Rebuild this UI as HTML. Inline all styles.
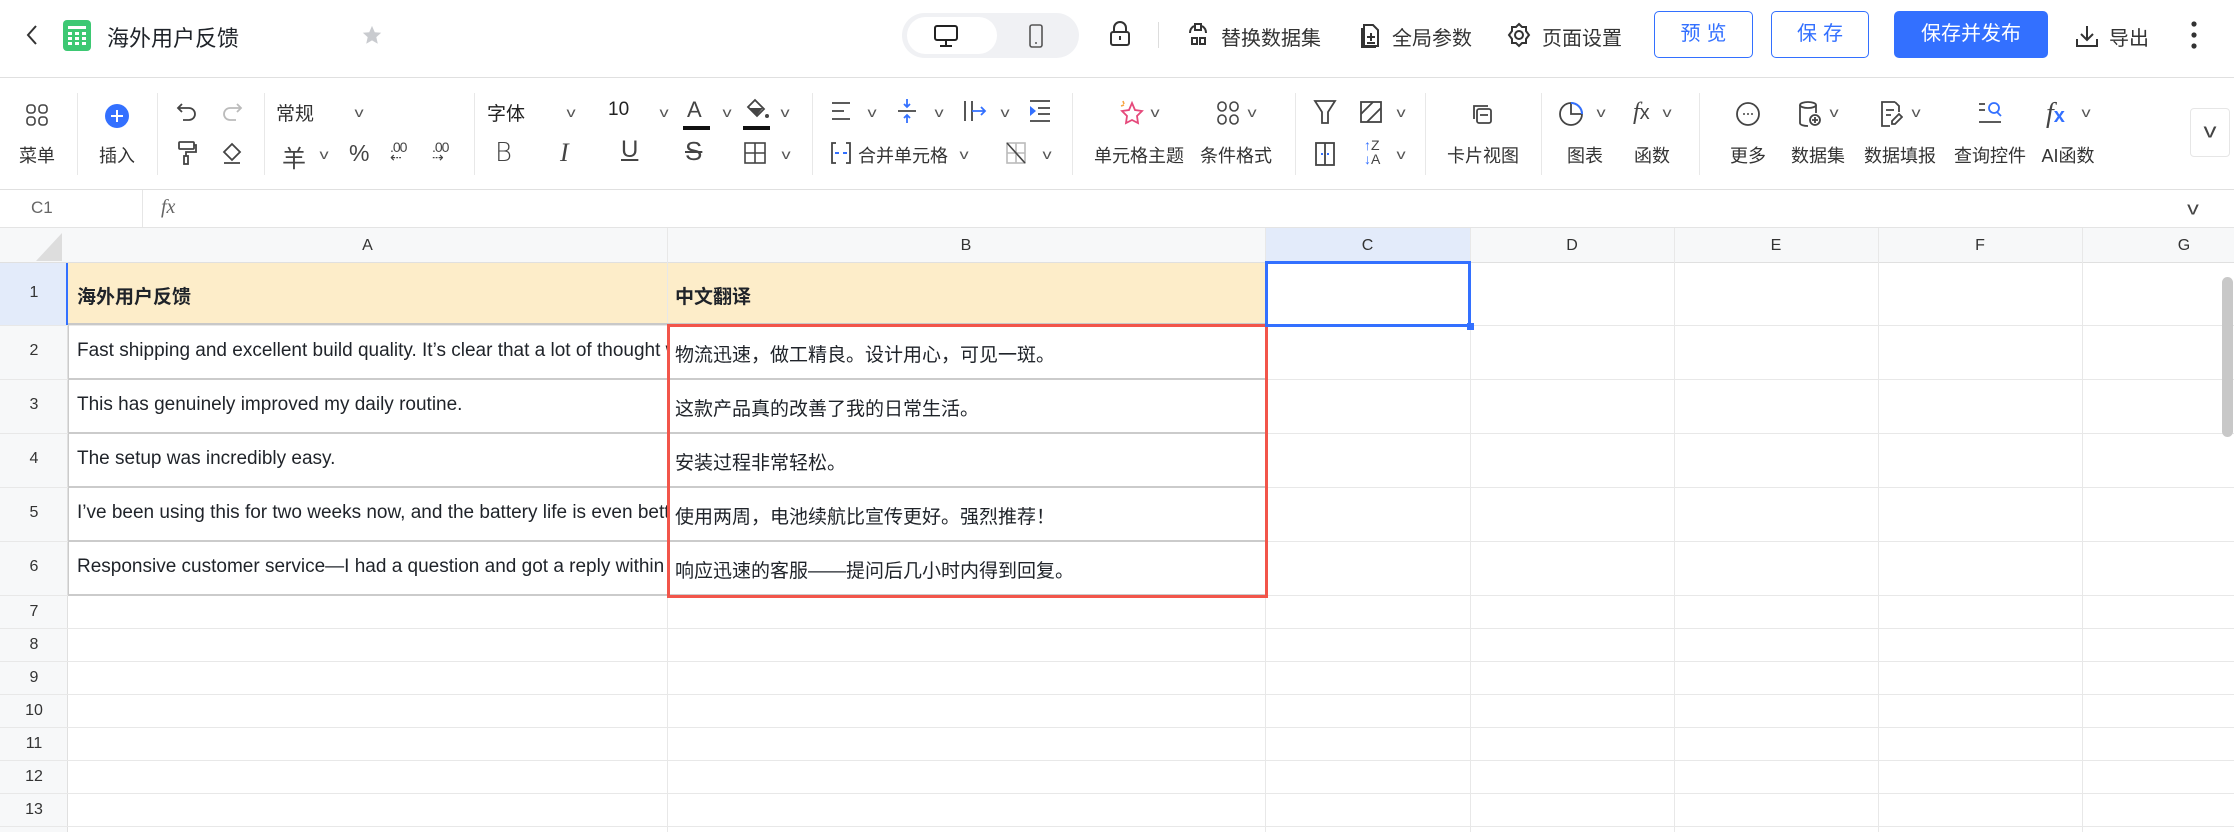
<!DOCTYPE html>
<html><head><meta charset="utf-8">
<style>
*{margin:0;padding:0;box-sizing:border-box}
body{width:2234px;height:832px;overflow:hidden;background:#fff;font-family:"Liberation Sans","Noto Sans CJK SC",sans-serif;color:#1f2329;position:relative}
.a{position:absolute;white-space:nowrap}
.t{font-size:18px;color:#333;transform:translateX(-50%)}
.ic{position:absolute;transform:translate(-50%,-50%)}
.ch{position:absolute;font-size:14px;color:#555;transform:translate(-50%,-50%) scaleX(1.3)}
.vl{position:absolute;width:1px;background:#e8e8e8}
.hl{position:absolute;height:1px;background:#e8e8e8}
.rn{position:absolute;left:0;width:68px;text-align:center;font-size:16px;color:#333}
.cl{position:absolute;top:228px;height:35px;line-height:35px;text-align:center;font-size:16px;color:#333}
.cell{position:absolute;font-size:19px;color:#1f2329;white-space:nowrap;overflow:hidden}
.hb{position:absolute;height:1px;background:#e0e0e0;top:189px}
</style></head><body>

<!-- header -->
<svg class="a" style="left:24px;top:24px" width="16" height="22" viewBox="0 0 16 22"><path d="M12 2 L4 11 L12 20" fill="none" stroke="#333" stroke-width="2"/></svg>
<div class="a" style="left:63px;top:20px;width:28px;height:31px;background:#3dc873;border-radius:4px"></div>
<div class="a" style="left:68px;top:26px;width:18px;height:3px;background:#fff"></div>
<svg class="a" style="left:68px;top:32px" width="18" height="14"><g fill="#fff"><rect x="0" y="0" width="4" height="3"/><rect x="7" y="0" width="4" height="3"/><rect x="14" y="0" width="4" height="3"/><rect x="0" y="5" width="4" height="3"/><rect x="7" y="5" width="4" height="3"/><rect x="14" y="5" width="4" height="3"/><rect x="0" y="10" width="4" height="3"/><rect x="7" y="10" width="4" height="3"/><rect x="14" y="10" width="4" height="3"/></g></svg>
<div class="a" style="left:107px;top:21px;font-size:22px;color:#1f2329">海外用户反馈</div>
<svg class="a" style="left:361px;top:24px" width="22" height="22" viewBox="0 0 24 24"><path d="M12 2l3 7 7 .6-5.3 4.7 1.6 7.2L12 17.8 5.7 21.5l1.6-7.2L2 9.6 9 9z" fill="#c9cbcf"/></svg>

<div class="a" style="left:902px;top:13px;width:177px;height:45px;background:#f0f1f4;border-radius:23px"></div>
<div class="a" style="left:907px;top:17px;width:90px;height:37px;background:#fff;border-radius:19px"></div>
<svg class="ic" style="left:946px;top:36px" width="26" height="24" viewBox="0 0 26 24"><rect x="2" y="2" width="22" height="14" rx="2" fill="none" stroke="#222" stroke-width="2"/><path d="M13 16v5M7 22h12" stroke="#222" stroke-width="2"/></svg>
<svg class="ic" style="left:1036px;top:36px" width="16" height="26" viewBox="0 0 16 26"><rect x="2" y="2" width="12" height="22" rx="2" fill="none" stroke="#555" stroke-width="1.6"/><circle cx="8" cy="20" r="1" fill="#555"/></svg>

<svg class="ic" style="left:1120px;top:34px" width="22" height="26" viewBox="0 0 22 26"><path d="M5 11V7a6 6 0 0 1 12 0v4" fill="none" stroke="#333" stroke-width="2"/><rect x="2" y="11" width="18" height="13" rx="2" fill="none" stroke="#333" stroke-width="2"/><path d="M11 15v4" stroke="#333" stroke-width="2"/></svg>
<div class="a" style="left:1158px;top:22px;width:1px;height:26px;background:#ddd"></div>
<svg class="ic" style="left:1198px;top:34px" width="24" height="26" viewBox="0 0 24 26"><g fill="none" stroke="#333" stroke-width="2"><path d="M9 3h6v6H9zM6 17h5v6H6zM14 17h5v6h-5z"/><path d="M4 12a8 8 0 0 1 4-7M20 12a8 8 0 0 0-4-7"/></g></svg>
<div class="a" style="left:1221px;top:22px;font-size:20px;color:#333">替换数据集</div>
<svg class="ic" style="left:1370px;top:35px" width="22" height="28" viewBox="0 0 22 28"><g fill="none" stroke="#333" stroke-width="2"><path d="M5 4h9l5 5v16H5z"/><path d="M3 7v19h14M12 12v8M8 16h8M8 22h8"/></g></svg>
<div class="a" style="left:1392px;top:22px;font-size:20px;color:#333">全局参数</div>
<svg class="ic" style="left:1519px;top:35px" width="26" height="26" viewBox="0 0 26 26"><g fill="none" stroke="#333" stroke-width="2"><path d="M13 2l3 3h4v4l3 4-3 4v4h-4l-3 3-3-3H6v-4l-3-4 3-4V5h4z"/><circle cx="13" cy="13" r="4"/></g></svg>
<div class="a" style="left:1542px;top:22px;font-size:20px;color:#333">页面设置</div>
<div class="a" style="left:1654px;top:11px;width:99px;height:47px;border:1px solid #3370ff;border-radius:5px;color:#3370ff;font-size:20px;text-align:center;line-height:45px;letter-spacing:6px;padding-left:6px">预览</div>
<div class="a" style="left:1771px;top:11px;width:98px;height:47px;border:1px solid #3370ff;border-radius:5px;color:#3370ff;font-size:20px;text-align:center;line-height:45px;letter-spacing:6px;padding-left:6px">保存</div>
<div class="a" style="left:1894px;top:11px;width:154px;height:47px;background:#3370ff;border-radius:5px;color:#fff;font-size:20px;text-align:center;line-height:47px">保存并发布</div>
<svg class="ic" style="left:2087px;top:36px" width="26" height="26" viewBox="0 0 26 26"><g fill="none" stroke="#333" stroke-width="2"><path d="M13 3v14M7 11l6 6 6-6M3 16v7h20v-7"/></g></svg>
<div class="a" style="left:2109px;top:22px;font-size:20px;color:#333">导出</div>
<svg class="ic" style="left:2194px;top:35px" width="8" height="30"><circle cx="4" cy="4" r="2.6" fill="#333"/><circle cx="4" cy="15" r="2.6" fill="#333"/><circle cx="4" cy="26" r="2.6" fill="#333"/></svg>
<div class="a" style="left:0;top:77px;width:2234px;height:1px;background:#e0e0e0"></div>

<!-- toolbar -->
<div class="a" style="left:77px;top:93px;width:1px;height:82px;background:#e8e8e8"></div>
<div class="a" style="left:157px;top:93px;width:1px;height:82px;background:#e8e8e8"></div>
<div class="a" style="left:264px;top:93px;width:1px;height:82px;background:#e8e8e8"></div>
<div class="a" style="left:474px;top:93px;width:1px;height:82px;background:#e8e8e8"></div>
<div class="a" style="left:812px;top:93px;width:1px;height:82px;background:#e8e8e8"></div>
<div class="a" style="left:1072px;top:93px;width:1px;height:82px;background:#e8e8e8"></div>
<div class="a" style="left:1295px;top:93px;width:1px;height:82px;background:#e8e8e8"></div>
<div class="a" style="left:1425px;top:93px;width:1px;height:82px;background:#e8e8e8"></div>
<div class="a" style="left:1541px;top:93px;width:1px;height:82px;background:#e8e8e8"></div>
<div class="a" style="left:1699px;top:93px;width:1px;height:82px;background:#e8e8e8"></div>

<svg class="ic" style="left:37px;top:115px" width="24" height="24" viewBox="0 0 24 24"><g fill="none" stroke="#444" stroke-width="1.6"><rect x="2" y="2" width="8" height="8" rx="3"/><rect x="14" y="2" width="8" height="8" rx="3"/><rect x="2" y="14" width="8" height="8" rx="3"/><rect x="14" y="14" width="8" height="8" rx="3"/></g></svg>
<div class="a t" style="left:37px;top:142px">菜单</div>
<svg class="ic" style="left:117px;top:116px" width="24" height="24"><circle cx="12" cy="12" r="12" fill="#3370ff"/><path d="M12 6v12M6 12h12" stroke="#fff" stroke-width="2"/></svg>
<div class="a t" style="left:117px;top:142px">插入</div>

<svg class="ic" style="left:187px;top:112px" width="24" height="24" viewBox="0 0 24 24"><path d="M7 4L3 8l4 4M3 8h11a6 6 0 0 1 0 12H8" fill="none" stroke="#444" stroke-width="1.8"/></svg>
<svg class="ic" style="left:232px;top:112px" width="24" height="24" viewBox="0 0 24 24"><path d="M17 4l4 4-4 4M21 8H10a6 6 0 0 0 0 12h6" fill="none" stroke="#bbb" stroke-width="1.8"/></svg>
<svg class="ic" style="left:187px;top:153px" width="22" height="26" viewBox="0 0 22 26"><g fill="none" stroke="#444" stroke-width="1.8"><rect x="3" y="2" width="15" height="7" rx="1"/><path d="M18 5h2v7H10v4"/><rect x="8" y="16" width="4" height="8"/></g></svg>
<svg class="ic" style="left:232px;top:153px" width="24" height="24" viewBox="0 0 24 24"><g fill="none" stroke="#444" stroke-width="1.8"><path d="M12 3l8 8-8 8-8-8zM4 22h16"/></g></svg>

<div class="a" style="left:276px;top:99px;font-size:19px;color:#333">常规</div>
<div class="ch" style="left:359px;top:112px">v</div>
<div class="a" style="left:282px;top:139px;font-size:24px;color:#444">羊</div>
<div class="ch" style="left:324px;top:154px">v</div>
<div class="a" style="left:349px;top:140px;font-size:23px;color:#444">%</div>
<div class="a" style="left:390px;top:139px;font-size:14px;color:#444;letter-spacing:-1px">.00<br><span style="position:relative;top:-6px">⇠</span></div>
<div class="a" style="left:432px;top:139px;font-size:14px;color:#444;letter-spacing:-1px">.00<br><span style="position:relative;top:-6px">⇢</span></div>

<div class="a" style="left:487px;top:99px;font-size:19px;color:#222">字体</div>
<div class="ch" style="left:571px;top:112px">v</div>
<div class="a" style="left:608px;top:99px;font-size:19px;color:#222">10</div>
<div class="ch" style="left:664px;top:112px">v</div>
<div class="a" style="left:687px;top:97px;font-size:22px;color:#444">A</div>
<div class="a" style="left:683px;top:126px;width:27px;height:4px;background:#111"></div>
<div class="ch" style="left:727px;top:112px">v</div>
<svg class="ic" style="left:757px;top:110px" width="28" height="24" viewBox="0 0 28 24"><path d="M12 2l9 9-7 7-9-9z" fill="none" stroke="#444" stroke-width="1.8"/><path d="M6 10h14l-6 7z" fill="#444"/><circle cx="24" cy="18" r="2" fill="#444"/></svg>
<div class="a" style="left:743px;top:126px;width:27px;height:4px;background:#111"></div>
<div class="ch" style="left:785px;top:112px">v</div>
<div class="a" style="left:495px;top:138px;font-size:26px;color:#444;font-family:'DejaVu Sans',sans-serif;font-weight:200">B</div>
<div class="a" style="left:560px;top:138px;font-size:26px;color:#444;font-style:italic;font-family:'Liberation Serif',serif">I</div>
<div class="a" style="left:621px;top:136px;font-size:24px;color:#444;text-decoration:underline">U</div>
<div class="a" style="left:685px;top:136px;font-size:26px;color:#444;text-decoration:line-through">S</div>
<svg class="ic" style="left:755px;top:153px" width="24" height="24" viewBox="0 0 24 24"><g fill="none" stroke="#444" stroke-width="1.6"><rect x="2" y="2" width="20" height="20"/><path d="M12 2v20M2 12h20"/></g></svg>
<div class="ch" style="left:786px;top:154px">v</div>

<svg class="ic" style="left:841px;top:111px" width="22" height="22" viewBox="0 0 22 22"><path d="M2 3h18M2 11h12M2 19h18" stroke="#444" stroke-width="1.8"/></svg>
<div class="ch" style="left:872px;top:112px">v</div>
<svg class="ic" style="left:907px;top:111px" width="22" height="26" viewBox="0 0 22 26"><path d="M2 13h18" stroke="#444" stroke-width="1.8"/><path d="M11 1v8M8 6l3 3 3-3M11 25v-8M8 20l3-3 3 3" fill="none" stroke="#3370ff" stroke-width="1.8"/></svg>
<div class="ch" style="left:939px;top:112px">v</div>
<svg class="ic" style="left:975px;top:111px" width="26" height="24" viewBox="0 0 26 24"><path d="M3 2v20M10 2v20" stroke="#444" stroke-width="1.8"/><path d="M10 12h13M19 8l4 4-4 4" fill="none" stroke="#3370ff" stroke-width="1.8"/></svg>
<div class="ch" style="left:1005px;top:112px">v</div>
<svg class="ic" style="left:1040px;top:111px" width="24" height="24" viewBox="0 0 24 24"><path d="M2 2h20M10 9h12M10 15h12M2 22h20" stroke="#444" stroke-width="1.8"/><path d="M2 7l6 5-6 5z" fill="#3370ff"/></svg>
<svg class="ic" style="left:841px;top:153px" width="22" height="24" viewBox="0 0 22 24"><g fill="none" stroke="#444" stroke-width="1.8"><path d="M6 2H2v20h4M16 2h4v20h-4"/></g><path d="M5 12h4M13 12h4" stroke="#3370ff" stroke-width="2"/></svg>
<div class="a" style="left:858px;top:142px;font-size:18px;color:#333">合并单元格</div>
<div class="ch" style="left:964px;top:154px">v</div>
<svg class="ic" style="left:1016px;top:153px" width="22" height="24" viewBox="0 0 22 24"><g fill="none" stroke="#bbb" stroke-width="1.6"><rect x="2" y="2" width="18" height="20"/><path d="M11 2v20M2 12h18"/></g><path d="M2 2l18 20" stroke="#444" stroke-width="1.6"/></svg>
<div class="ch" style="left:1047px;top:154px">v</div>

<svg class="ic" style="left:1132px;top:113px" width="26" height="28" viewBox="0 0 26 28"><path d="M13 4l3 7 7 1-5 5 1 7-6-3-6 3 1-7-5-5 7-1z" fill="none" stroke="#e5497b" stroke-width="1.8"/><path d="M4 2l1 3M2 7l3-1" stroke="#f7a540" stroke-width="1.6"/></svg>
<div class="ch" style="left:1155px;top:112px">v</div>
<div class="a t" style="left:1139px;top:142px">单元格主题</div>
<svg class="ic" style="left:1228px;top:113px" width="24" height="26" viewBox="0 0 24 26"><g fill="none" stroke="#444" stroke-width="1.6"><rect x="2" y="2" width="8" height="9" rx="4"/><rect x="14" y="2" width="8" height="9" rx="4"/><rect x="2" y="15" width="8" height="9" rx="4"/><rect x="14" y="15" width="8" height="9" rx="4"/></g></svg>
<div class="ch" style="left:1252px;top:112px">v</div>
<div class="a t" style="left:1236px;top:142px">条件格式</div>

<svg class="ic" style="left:1325px;top:112px" width="24" height="26" viewBox="0 0 24 26"><path d="M2 2h20l-7 11v11h-6V13z" fill="none" stroke="#444" stroke-width="1.8"/></svg>
<svg class="ic" style="left:1371px;top:112px" width="24" height="24" viewBox="0 0 24 24"><g fill="none" stroke="#444" stroke-width="1.8"><rect x="2" y="2" width="20" height="20"/><path d="M2 14L14 2M8 22L22 8"/></g></svg>
<div class="ch" style="left:1401px;top:112px">v</div>
<svg class="ic" style="left:1325px;top:154px" width="22" height="26" viewBox="0 0 22 26"><g fill="none" stroke="#444" stroke-width="1.8"><rect x="2" y="2" width="18" height="22"/><path d="M11 2v22"/></g><path d="M7 13h2M13 13h2" stroke="#3370ff" stroke-width="2"/></svg>
<div class="a" style="left:1364px;top:138px;font-size:14px;line-height:14px;color:#444"><span style="color:#3370ff">↑</span>Z<br><span style="color:#3370ff">↓</span>A</div>
<div class="ch" style="left:1401px;top:154px">v</div>

<svg class="ic" style="left:1483px;top:114px" width="24" height="24" viewBox="0 0 24 24"><g fill="none" stroke="#444" stroke-width="1.8"><rect x="6" y="7" width="14" height="14" rx="2"/><path d="M3 17V4h14M9 13h8"/></g></svg>
<div class="a t" style="left:1483px;top:142px">卡片视图</div>

<svg class="ic" style="left:1571px;top:114px" width="26" height="26" viewBox="0 0 26 26"><circle cx="13" cy="13" r="11" fill="none" stroke="#444" stroke-width="1.8"/><path d="M13 2v11h11" fill="none" stroke="#444" stroke-width="1.8"/><path d="M13 2a11 11 0 0 1 11 11" fill="none" stroke="#3370ff" stroke-width="2"/></svg>
<div class="ch" style="left:1601px;top:112px">v</div>
<div class="a t" style="left:1585px;top:142px">图表</div>
<div class="a" style="left:1633px;top:99px;font-size:24px;color:#444;font-style:italic;font-family:'Liberation Serif',serif">f<span style="font-style:normal;font-family:'Liberation Sans';font-size:20px">x</span></div>
<div class="ch" style="left:1667px;top:112px">v</div>
<div class="a t" style="left:1652px;top:142px">函数</div>

<svg class="ic" style="left:1748px;top:114px" width="26" height="26" viewBox="0 0 26 26"><circle cx="13" cy="13" r="11" fill="none" stroke="#444" stroke-width="1.8"/><circle cx="9" cy="13" r="1" fill="#444"/><circle cx="13" cy="13" r="1" fill="#444"/><circle cx="17" cy="13" r="1" fill="#444"/></svg>
<div class="a t" style="left:1748px;top:142px">更多</div>
<svg class="ic" style="left:1810px;top:114px" width="24" height="28" viewBox="0 0 24 28"><g fill="none" stroke="#444" stroke-width="1.8"><ellipse cx="10" cy="5" rx="8" ry="3"/><path d="M2 5v18c0 2 4 3 8 3M18 5v8"/><circle cx="17" cy="20" r="5"/><path d="M17 17v6M14 20h6"/></g></svg>
<div class="ch" style="left:1834px;top:112px">v</div>
<div class="a t" style="left:1818px;top:142px">数据集</div>
<svg class="ic" style="left:1891px;top:114px" width="24" height="28" viewBox="0 0 24 28"><g fill="none" stroke="#444" stroke-width="1.8"><path d="M16 2H3v24h8M16 2l4 4v6M7 10h8M7 15h5"/><path d="M20 14l3 3-7 7h-3v-3z"/></g></svg>
<div class="ch" style="left:1916px;top:112px">v</div>
<div class="a t" style="left:1900px;top:142px">数据填报</div>
<svg class="ic" style="left:1990px;top:112px" width="28" height="24" viewBox="0 0 28 24"><g fill="none" stroke="#444" stroke-width="1.8"><path d="M3 4h6M3 10h6M3 22h22"/><circle cx="18" cy="8" r="5" stroke="#3370ff"/><path d="M21 12l4 4" stroke="#3370ff"/></g></svg>
<div class="a t" style="left:1990px;top:142px">查询控件</div>
<div class="a" style="left:2046px;top:98px;font-size:28px;color:#444;font-style:italic;font-family:'Liberation Serif',serif">f<span style="font-style:normal;font-family:'Liberation Sans';font-size:20px;color:#3370ff;font-weight:bold">x</span></div>
<div class="ch" style="left:2086px;top:112px">v</div>
<div class="a t" style="left:2068px;top:142px">AI函数</div>

<div class="a" style="left:2190px;top:108px;width:40px;height:49px;border:1px solid #e6e6e6;border-radius:4px"></div>
<div class="ch" style="left:2210px;top:132px;font-size:20px;color:#444">v</div>

<div class="hb" style="left:0;width:2234px"></div>

<!-- formula bar -->
<div class="a" style="left:31px;top:198px;font-size:17px;color:#666">C1</div>
<div class="a" style="left:142px;top:190px;width:1px;height:38px;background:#e6e6e6"></div>
<div class="a" style="left:161px;top:196px;font-size:20px;color:#666;font-style:italic;font-family:'Liberation Serif',serif">fx</div>
<div class="ch" style="left:2193px;top:209px;font-size:18px;color:#444">v</div>

<!-- column header -->
<div class="a" style="left:0;top:227px;width:2234px;height:36px;background:#f7f8f9;border-top:1px solid #e4e4e4;border-bottom:1px solid #e0e0e0"></div>
<div class="a" style="left:1265px;top:228px;width:205px;height:35px;background:#e3ebfa"></div>
<svg class="a" style="left:36px;top:233px" width="28" height="28"><path d="M26 0V28H0z" fill="#ddd"/></svg>
<div class="cl" style="left:68px;width:599px">A</div>
<div class="cl" style="left:667px;width:598px">B</div>
<div class="cl" style="left:1265px;width:205px">C</div>
<div class="cl" style="left:1470px;width:204px">D</div>
<div class="cl" style="left:1674px;width:204px">E</div>
<div class="cl" style="left:1878px;width:204px">F</div>
<div class="cl" style="left:2082px;width:204px">G</div>

<!-- row header bg -->
<div class="a" style="left:0;top:263px;width:68px;height:569px;background:#f7f8f9;border-right:1px solid #e0e0e0"></div>
<div class="a" style="left:0;top:263px;width:68px;height:62px;background:#e3ebfa"></div>
<div class="a" style="left:66px;top:263px;width:2px;height:62px;background:#3370ff"></div>

<!-- row1 bg -->
<div class="a" style="left:68px;top:263px;width:1197px;height:62px;background:#fdedc9"></div>

<!-- vertical lines -->
<div class="vl" style="left:667px;top:228px;height:604px"></div>
<div class="vl" style="left:1265px;top:228px;height:604px"></div>
<div class="vl" style="left:1470px;top:228px;height:604px"></div>
<div class="vl" style="left:1674px;top:228px;height:604px"></div>
<div class="vl" style="left:1878px;top:228px;height:604px"></div>
<div class="vl" style="left:2082px;top:228px;height:604px"></div>

<!-- horizontal lines -->
<div class="hl" style="left:0;top:325px;width:2234px"></div>
<div class="hl" style="left:0;top:379px;width:2234px"></div>
<div class="hl" style="left:0;top:433px;width:2234px"></div>
<div class="hl" style="left:0;top:487px;width:2234px"></div>
<div class="hl" style="left:0;top:541px;width:2234px"></div>
<div class="hl" style="left:0;top:595px;width:2234px"></div>
<div class="hl" style="left:0;top:628px;width:2234px"></div>
<div class="hl" style="left:0;top:661px;width:2234px"></div>
<div class="hl" style="left:0;top:694px;width:2234px"></div>
<div class="hl" style="left:0;top:727px;width:2234px"></div>
<div class="hl" style="left:0;top:760px;width:2234px"></div>
<div class="hl" style="left:0;top:793px;width:2234px"></div>
<div class="hl" style="left:0;top:826px;width:2234px"></div>
<!-- darker formatted borders -->
<div class="a" style="left:68px;top:323px;width:1197px;height:2px;background:#c8c8c8"></div>
<div class="a" style="left:68px;top:378px;width:1197px;height:2px;background:#cbcbcb"></div>
<div class="a" style="left:68px;top:432px;width:1197px;height:2px;background:#cbcbcb"></div>
<div class="a" style="left:68px;top:486px;width:1197px;height:2px;background:#cbcbcb"></div>
<div class="a" style="left:68px;top:540px;width:1197px;height:2px;background:#cbcbcb"></div>
<div class="a" style="left:68px;top:594px;width:1197px;height:2px;background:#cbcbcb"></div>
<div class="a" style="left:68px;top:325px;width:1px;height:270px;background:#cbcbcb"></div>

<!-- row numbers -->
<div class="rn" style="top:284px">1</div>
<div class="rn" style="top:342px">2</div>
<div class="rn" style="top:396px">3</div>
<div class="rn" style="top:450px">4</div>
<div class="rn" style="top:504px">5</div>
<div class="rn" style="top:558px">6</div>
<div class="rn" style="top:603px">7</div>
<div class="rn" style="top:636px">8</div>
<div class="rn" style="top:669px">9</div>
<div class="rn" style="top:702px">10</div>
<div class="rn" style="top:735px">11</div>
<div class="rn" style="top:768px">12</div>
<div class="rn" style="top:801px">13</div>

<!-- cells -->
<div class="cell" style="left:77px;top:282px;font-weight:bold">海外用户反馈</div>
<div class="cell" style="left:675px;top:282px;font-weight:bold">中文翻译</div>
<div class="cell" style="left:77px;top:340px;width:590px">Fast shipping and excellent build quality. It’s clear that a lot of thought went into this.</div>
<div class="cell" style="left:675px;top:340px">物流迅速，做工精良。设计用心，可见一斑。</div>
<div class="cell" style="left:77px;top:394px">This has genuinely improved my daily routine.</div>
<div class="cell" style="left:675px;top:394px">这款产品真的改善了我的日常生活。</div>
<div class="cell" style="left:77px;top:448px">The setup was incredibly easy.</div>
<div class="cell" style="left:675px;top:448px">安装过程非常轻松。</div>
<div class="cell" style="left:77px;top:502px;width:590px">I’ve been using this for two weeks now, and the battery life is even better than advertised.</div>
<div class="cell" style="left:675px;top:502px">使用两周，电池续航比宣传更好。强烈推荐！</div>
<div class="cell" style="left:77px;top:556px;width:590px">Responsive customer service—I had a question and got a reply within hours.</div>
<div class="cell" style="left:675px;top:556px">响应迅速的客服——提问后几小时内得到回复。</div>

<!-- red box -->
<div class="a" style="left:667px;top:324px;width:601px;height:274px;border:3px solid #f2554a"></div>
<!-- selection -->
<div class="a" style="left:1265px;top:261px;width:206px;height:66px;border:3px solid #3370ff"></div>
<div class="a" style="left:1467px;top:323px;width:7px;height:7px;background:#3370ff"></div>

<!-- scrollbar -->
<div class="a" style="left:2222px;top:277px;width:11px;height:160px;background:#c8c8c8;border-radius:6px"></div>
</body></html>
